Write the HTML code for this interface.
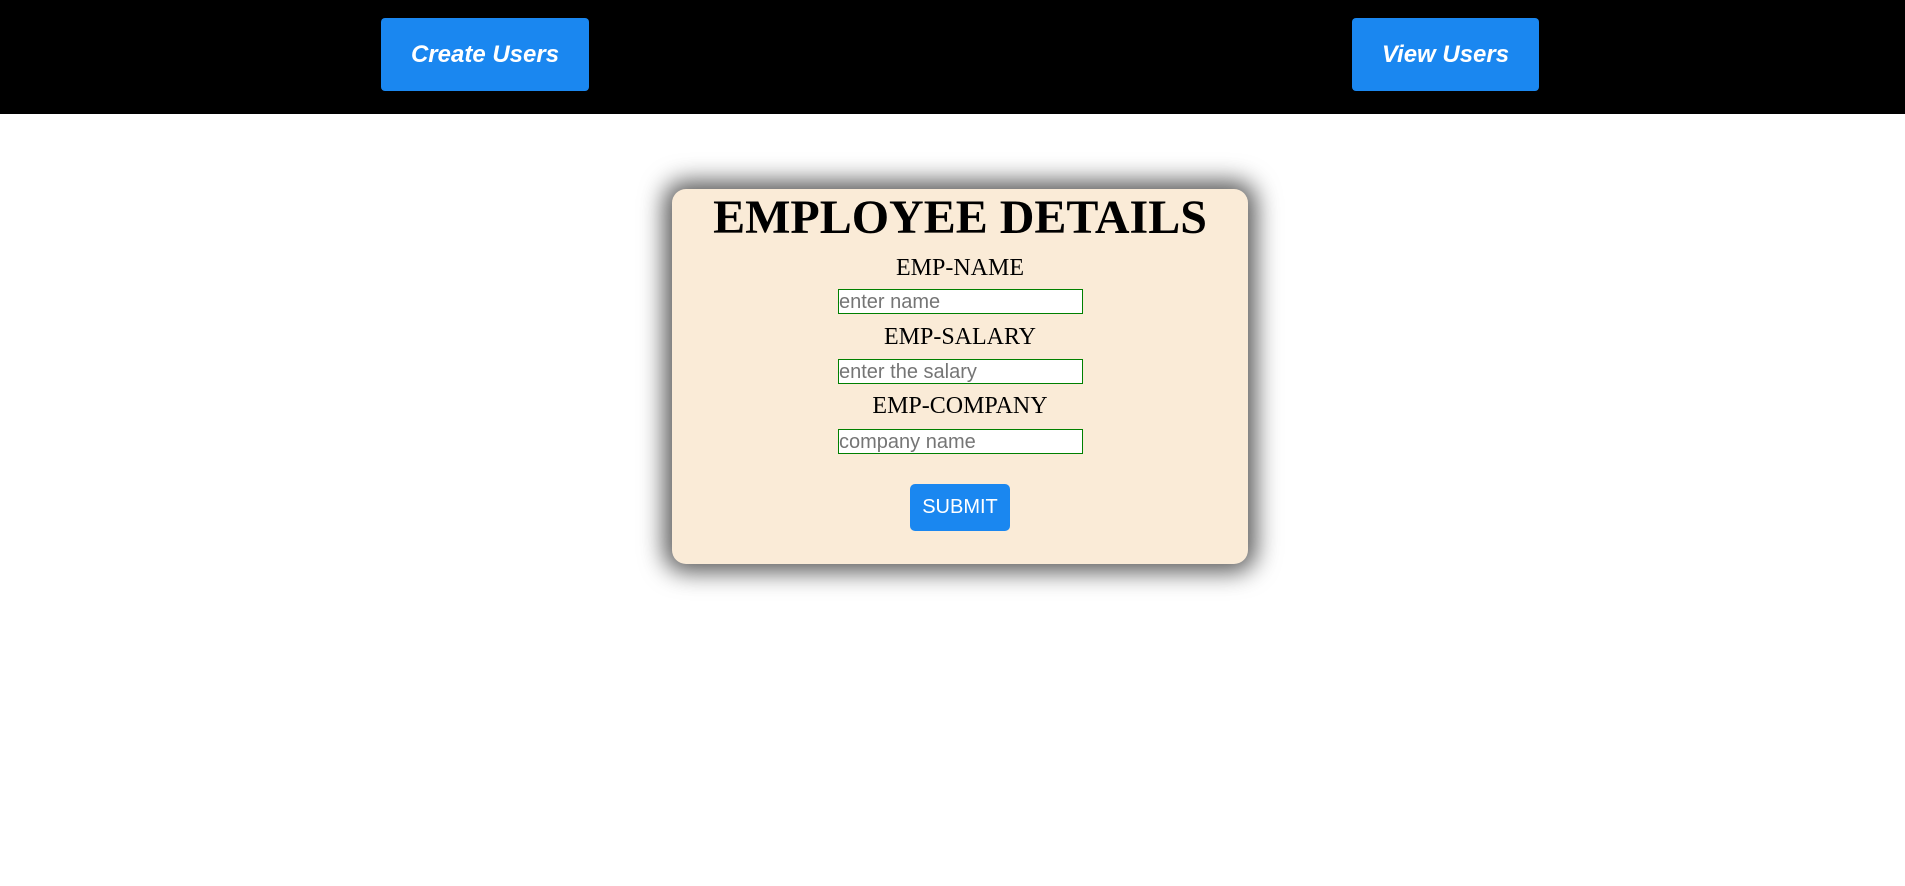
<!DOCTYPE html>
<html><head><meta charset="utf-8"><style>
*{margin:0;padding:0;box-sizing:border-box}
html,body{width:1905px;height:886px;background:#fff;overflow:hidden;position:relative}
.hdr{position:absolute;left:0;top:0;width:1905px;height:114px;background:#000}
.nb{position:absolute;top:18px;height:73px;background:#1a87f0;border-radius:4px;color:#fff;font:italic bold 24px "Liberation Sans",sans-serif;display:flex;align-items:center;justify-content:center}
.card{position:absolute;left:672px;top:189px;width:576px;height:375px;background:#faebd7;border-radius:14px;box-shadow:0 0 24px 8px rgba(0,0,0,.65)}
.t{position:absolute;left:0;width:1920px;text-align:center;font-family:"Liberation Serif",serif;color:#000}
.h{top:194px;font-size:48px;line-height:48px;font-weight:bold}
.l{font-size:24px;line-height:24px}
.in{position:absolute;left:838px;width:245px;height:25px;border:1px solid #008000;background:#fff;font:20px/24px "Liberation Sans",sans-serif;color:#757575;padding-left:0;white-space:nowrap;overflow:hidden}
.sub{position:absolute;left:910px;top:484px;width:100px;height:47px;background:#1a87f0;border-radius:5px;color:#fff;font:20px "Liberation Sans",sans-serif;display:flex;align-items:center;justify-content:center}
</style></head><body>
<div class="hdr"></div>
<div class="nb" style="left:381px;width:208px">Create Users</div>
<div class="nb" style="left:1352px;width:187px">View Users</div>
<div class="card"></div>
<div class="t h">EMPLOYEE DETAILS</div>
<div class="t l" style="top:256px">EMP-NAME</div>
<div class="in" style="top:289px">enter name</div>
<div class="t l" style="top:325px">EMP-SALARY</div>
<div class="in" style="top:359px">enter the salary</div>
<div class="t l" style="top:394px">EMP-COMPANY</div>
<div class="in" style="top:429px">company name</div>
<div class="sub">SUBMIT</div>
</body></html>
